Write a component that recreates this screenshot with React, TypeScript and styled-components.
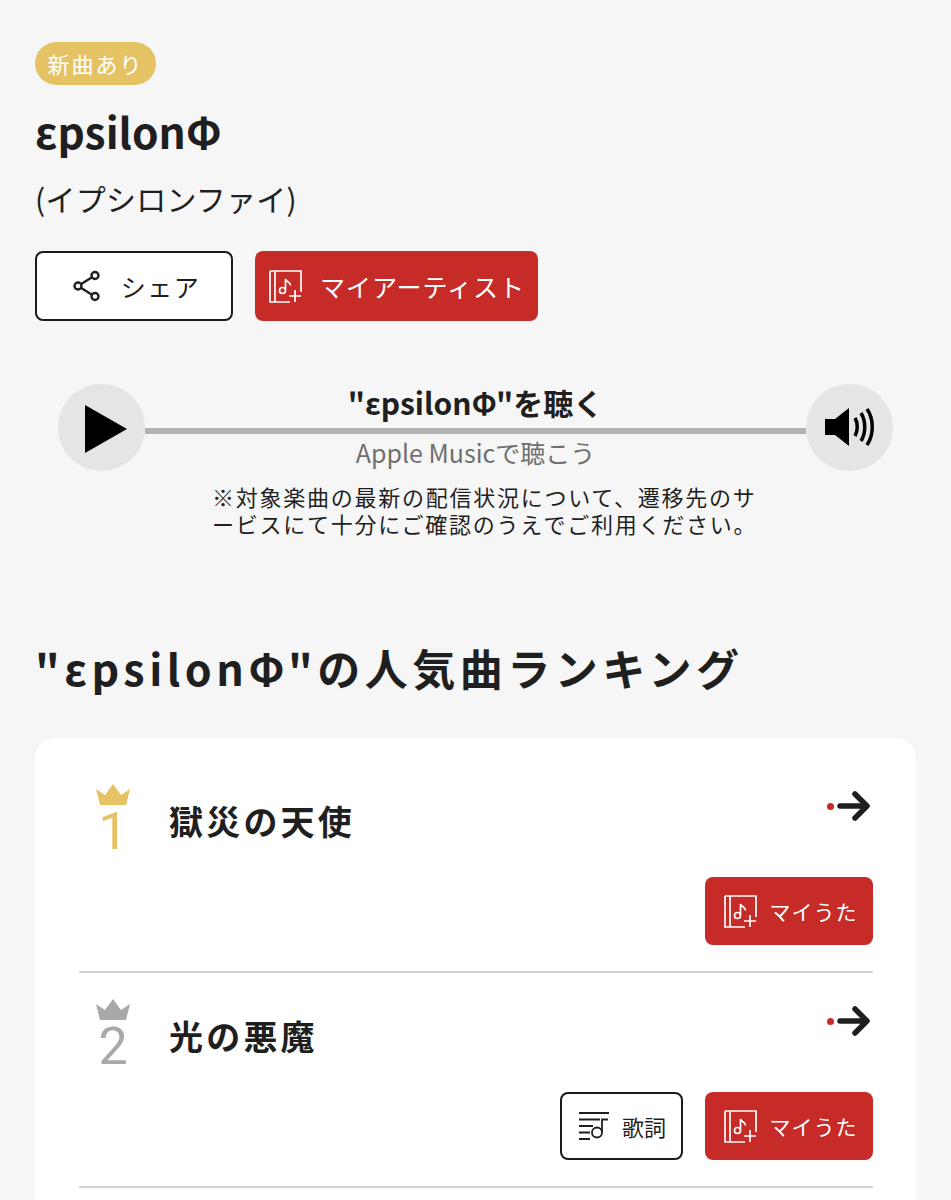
import React from 'react';
import styled, { createGlobalStyle } from 'styled-components';

const GlobalStyle = createGlobalStyle`
    html, body {
        margin: 0;
        padding: 0;
        background: #f6f6f6;
    }
    body {
        font-family: "Noto Sans CJK JP", "Noto Sans", sans-serif;
        color: #1f1f1f;
    }
`

const songs = [
    {rank: 1, title: '獄災の天使', color: '#e5c365', lyric: false},
    {rank: 2, title: '光の悪魔', color: '#a9a9a9', lyric: true},
];

function MyListIcon() {
    return (
        <svg width="33" height="33" viewBox="0 0 33 33" fill="none" stroke="#fff" strokeWidth="1.700">
            <path d="M1 1h31v21M1 1v31h20M6 1v31" />
            <path d="M10.500 20.500a3 3 0 1 0 6 0a3 3 0 1 0-6 0M16.500 20.500V9c1 3 5 3 5 6.500" />
            <path d="M26 20v12M20 26h12" />
        </svg>
    );
}

function ShareIcon() {
    return (
        <svg width="30" height="32" viewBox="0 0 30 32" fill="none" stroke="#1f1f1f" strokeWidth="2.400">
            <path d="M6 16L22 6M6 16l16 10" />
            <circle cx="6" cy="16" r="3.500" fill="#fff" />
            <circle cx="23" cy="5.500" r="3.500" fill="#fff" />
            <circle cx="23" cy="26.500" r="3.500" fill="#fff" />
        </svg>
    );
}

function LyricIcon() {
    return (
        <svg width="31" height="28" viewBox="0 0 31 28" fill="none" stroke="#1f1f1f" strokeWidth="1.800">
            <path d="M1 1h30M1 7.500h21M1 14h14M1 20.500h11M1 27h11" />
            <circle cx="19" cy="20.500" r="5" />
            <path d="M24 20.500V7.500h6" />
        </svg>
    );
}

function Crown({color}: {color: string}) {
    return (
        <svg width="34" height="21" viewBox="0 0 34 21">
            <path d="M0 5l9 6 8-11 8 11 9-6-4 16H4z" fill={color} />
        </svg>
    );
}

function ArrowIcon() {
    return (
        <svg width="33" height="32" viewBox="0 0 33 32" fill="none" stroke="#1f1f1f" strokeWidth="5.500" strokeLinecap="round" strokeLinejoin="round">
            <path d="M3 16h26M18 4l12 12-12 12" />
        </svg>
    );
}

export default function App() {
    return (
        <Page>
            <GlobalStyle />
            <Badge>新曲あり</Badge>
            <ArtistName>εpsilonΦ</ArtistName>
            <ArtistKana>(イプシロンファイ)</ArtistKana>
            <ActionRow>
                <ShareButton>
                    <ShareIcon />
                    <span>シェア</span>
                </ShareButton>
                <RedButton $width={283} $height={70} $size={25} $gap={18} $shift={1}>
                    <MyListIcon />
                    <span>マイアーティスト</span>
                </RedButton>
            </ActionRow>

            <Player>
                <RoundButton>
                    <PlayIcon width="42" height="48" viewBox="0 0 42 48">
                        <path d="M0 0l42 24L0 48z" fill="#000" />
                    </PlayIcon>
                </RoundButton>
                <PlayerCenter>
                    <PlayerTitle>"εpsilonΦ"を聴く</PlayerTitle>
                    <PlayerSub>Apple Musicで聴こう</PlayerSub>
                    <PlayerBar />
                </PlayerCenter>
                <RoundButton>
                    <svg width="52" height="40" viewBox="0 0 52 40" fill="none" stroke="#000" strokeWidth="3.500">
                        <path d="M1 12h10L25 1v38L11 28H1z" fill="#000" stroke="none" />
                        <path d="M31 11c3 5 3 13 0 18M37 6c5 8 5 20 0 28M43 2c7 10 7 26 0 36" />
                    </svg>
                </RoundButton>
            </Player>
            <Note>
                ※対象楽曲の最新の配信状況について、遷移先のサ<br />
                ービスにて十分にご確認のうえでご利用ください。
            </Note>

            <Heading>"εpsilonΦ"の人気曲ランキング</Heading>
            <RankCard>
                {songs.map((song) => (
                    <RankRow key={song.rank}>
                        <RankTop>
                            <RankMark>
                                <Crown color={song.color} />
                                <RankNumber $color={song.color}>{song.rank}</RankNumber>
                            </RankMark>
                            <SongTitle>{song.title}</SongTitle>
                            <ArrowBox>
                                <RedDot />
                                <ArrowIcon />
                            </ArrowBox>
                        </RankTop>
                        <RankButtons>
                            {song.lyric && (
                                <LyricButton>
                                    <LyricIcon />
                                    <span>歌詞</span>
                                </LyricButton>
                            )}
                            <RedButton $width={168} $height={68} $size={21} $gap={13} $shift={3}>
                                <MyListIcon />
                                <span>マイうた</span>
                            </RedButton>
                        </RankButtons>
                    </RankRow>
                ))}
            </RankCard>
        </Page>
    );
}

const Page = styled.div`
    width: 951px;
    height: 1200px;
    overflow: hidden;
    box-sizing: border-box;
    padding: 42px 35px 0;
    display: flex;
    flex-direction: column;
    align-items: flex-start;
`

const Badge = styled.div`
    width: 121px;
    height: 43px;
    border-radius: 22px;
    background: #e5c365;
    color: #fff;
    font-size: 22px;
    letter-spacing: 2px;
    line-height: 43px;
    text-align: center;
`

const ArtistName = styled.h1`
    margin: 14px 0 0;
    font-size: 42.500px;
    line-height: 64px;
    font-weight: 700;
`

const ArtistKana = styled.div`
    margin-top: 14px;
    font-size: 30px;
    letter-spacing: 0.250px;
    line-height: 42px;
`

const ActionRow = styled.div`
    margin-top: 32px;
    display: flex;
    gap: 22px;
`

const ShareButton = styled.div`
    width: 198px;
    height: 70px;
    box-sizing: border-box;
    border: 2px solid #1a1a1a;
    border-radius: 8px;
    background: #fff;
    padding-left: 4px;
    display: flex;
    align-items: center;
    justify-content: center;
    gap: 19px;
    font-size: 25px;
    letter-spacing: 1.500px;
`

const RedButton = styled.div<{$width: number; $height: number; $size: number; $gap: number; $shift: number}>`
    width: ${({$width}) => $width}px;
    height: ${({$height}) => $height}px;
    box-sizing: border-box;
    padding-left: ${({$shift}) => $shift}px;
    border-radius: 8px;
    background: #c62b27;
    color: #fff;
    display: flex;
    align-items: center;
    justify-content: center;
    gap: ${({$gap}) => $gap}px;
    font-size: ${({$size}) => $size}px;
    letter-spacing: 1px;
    flex-shrink: 0;
`

const Player = styled.div`
    margin: 63px 0 0 23px;
    width: 835px;
    height: 86px;
    display: flex;
    align-items: center;
`

const RoundButton = styled.div`
    width: 87px;
    height: 87px;
    border-radius: 50%;
    background: #e5e5e5;
    display: grid;
    place-items: center;
    flex-shrink: 0;
`

const PlayIcon = styled.svg`
    margin-left: 8px;
    margin-top: 4px;
`

const PlayerCenter = styled.div`
    position: relative;
    flex: 1;
    height: 86px;
    display: flex;
    flex-direction: column;
    align-items: center;
`

const PlayerTitle = styled.div`
    margin-top: -4px;
    font-size: 30px;
    line-height: 44px;
    font-weight: 700;
`

const PlayerSub = styled.div`
    margin-top: 10px;
    font-size: 25px;
    line-height: 36px;
    color: #6f6f6f;
`

const PlayerBar = styled.div`
    position: absolute;
    left: 0;
    right: 0;
    top: 44px;
    height: 6px;
    background: #b2b2b2;
`

const Note = styled.div`
    margin: 13px 0 0 177px;
    font-size: 22px;
    line-height: 27px;
    letter-spacing: 1.750px;
    white-space: nowrap;
`

const Heading = styled.h2`
    margin: 100px 0 0;
    font-size: 43px;
    line-height: 60px;
    font-weight: 700;
    letter-spacing: 4.500px;
    white-space: nowrap;
`

const RankCard = styled.div`
    margin-top: 41px;
    flex: 1;
    width: 881px;
    box-sizing: border-box;
    padding: 20px 43px 0 44px;
    background: #fff;
    border-radius: 20px 20px 0 0;
`

const RankRow = styled.div`
    height: 215px;
    box-sizing: border-box;
    padding-top: 26px;
    display: flex;
    flex-direction: column;
    border-bottom: 2px solid #d2d2d2;
`

const RankTop = styled.div`
    display: flex;
    align-items: flex-start;
`

const RankMark = styled.div`
    width: 68px;
    display: flex;
    flex-direction: column;
    align-items: center;
`

const RankNumber = styled.div<{$color: string}>`
    margin-top: 2px;
    font-family: "Roboto", sans-serif;
    font-size: 52px;
    line-height: 50px;
    font-weight: 400;
    color: ${({$color}) => $color};
`

const SongTitle = styled.div`
    margin-left: 22px;
    margin-top: 12px;
    font-size: 34px;
    line-height: 50px;
    font-weight: 700;
    letter-spacing: 3.200px;
`

const ArrowBox = styled.div`
    margin-left: auto;
    margin-right: 3px;
    margin-top: 6px;
    display: flex;
    align-items: center;
    gap: 3px;
`

const RedDot = styled.span`
    width: 7px;
    height: 7px;
    border-radius: 50%;
    background: #c62b27;
`

const RankButtons = styled.div`
    margin-top: auto;
    margin-bottom: 26px;
    display: flex;
    justify-content: flex-end;
    gap: 22px;
`

const LyricButton = styled.div`
    width: 123px;
    height: 68px;
    box-sizing: border-box;
    border: 2px solid #1a1a1a;
    border-radius: 8px;
    padding-left: 1px;
    display: flex;
    align-items: center;
    justify-content: center;
    gap: 13px;
    font-size: 22px;
`
